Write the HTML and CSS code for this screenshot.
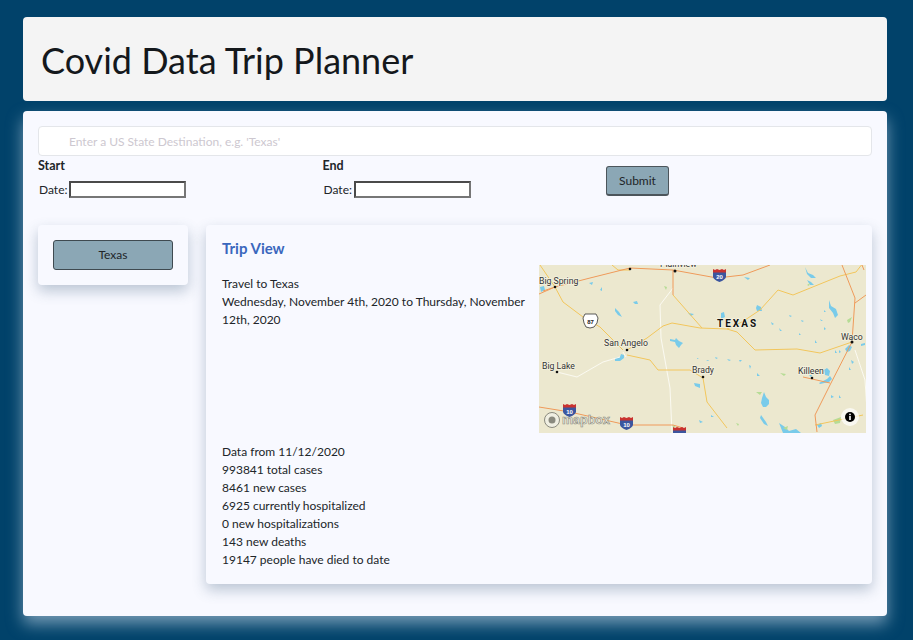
FILE: index.html
```html
<!DOCTYPE html>
<html lang="en">
<head>
<meta charset="utf-8">
<title>Covid Data Trip Planner</title>
<link rel="stylesheet" href="styles.css">
</head>
<body>
<header class="banner"><h1>Covid Data Trip Planner</h1></header>
<main class="panel">
  <input class="search" type="text" placeholder="Enter a US State Destination, e.g. 'Texas'">
  <form class="dates">
    <div class="field"><strong>Start</strong><label>Date: <input class="date" type="text"></label></div>
    <div class="field"><strong>End</strong><label>Date: <input class="date" type="text"></label></div>
    <div class="action"><button class="btn submit" type="button">Submit</button></div>
  </form>
  <div class="content">
    <aside class="card side"><button class="btn state" type="button">Texas</button></aside>
    <section class="card trip">
      <h2>Trip View</h2>
      <div class="trip-top">
        <p class="info">Travel to Texas<br>Wednesday, November 4th, 2020 to Thursday, November 12th, 2020</p>
        <svg class="map" viewBox="0 0 327 168" width="327" height="168" role="img" aria-label="Map of Texas">
          <defs>
            <filter id="soft"><feGaussianBlur stdDeviation="0.3"/></filter>
          </defs>
          <rect class="land" width="327" height="168"/>
          <g filter="url(#soft)">
            <g class="water">
              <path d="M76 43l4 4 3 5-4-2-3-4z"/><path d="M94 37l4-1 1 3-3 0z"/>
              <path d="M131 74l5 1 1-2 3 3 4 2-2 2-2 3-3-3-1-3-5-1z"/>
              <path d="M76 93l5-1 1-3 3 1 0 3-4 3-5 0z"/>
              <path d="M225 127l2 5 3 3 0 4-3 3-3 0-2-4 1-5z"/><path d="M222 150l5 7 2 4-4-2-4-6z"/>
              <path d="M290 35l2 6 5 3 2 6-3 3-2-5-4-5z"/>
              <path d="M218 40l4 2 1 4-5 0-1-3z"/><path d="M182 48l3-1 1 5-4 2z"/>
              <path d="M266 2l3 6 5 2 3 3-5 0-4-4z"/><path d="M268 15l4 2 3 3-4 0z"/><path d="M1 22l4-1 1 4-4 2z"/><path d="M50 18l4-1-1 3z"/><path d="M61 25l2-3 0 4z"/><path d="M205 12l6 1-2 2z"/><path d="M149 48l6 1-3 2z"/>
              <path d="M280 118l8-4 3-3 2 3-3 3-9 2z"/><path d="M285 105l3-2 3 3-1 5-4-1z"/>
              <path d="M306 84l4-4 3 2-2 4-3 1z"/><path d="M322 79l4-1 0 2-4 1z"/>
              <path d="M240 158l6 4 4 4 7-2 5 4h-18z"/><path d="M278 160l4-2 1 3-3 2z"/>
              <path d="M155 118l6 1 0 4-5-2z"/><path d="M188 94l4 1-2 1zM176 92l3 1-2 1zM167 95l3 0-1 1zM158 93l2 1-2 0zM200 95l3 0-2 2zM210 100l2 1-1 3zM218 108l3 3-3 0zM232 57l3 2-2 1zM240 63l3 3-2 0zM250 50l3 1-2 1zM262 55l3 1-2 1zM285 62l2 2-2 1zM300 85l2 2-2 1zM270 110l3 0-1 2zM296 85l2 3-2 0zM312 95l3 2-2 2zM260 68l2 2-2 0zM276 75l2 3-2 0zM281 54l3 2-2 0zM285 45l2 2-2 0zM160 155l4 2-3 1zM172 150l3 2-3 0zM300 130l2 3-2 0zM310 102l2 3-2 0zM292 130l3 2-3 1z"/>
            </g>
            <g class="green"><path d="M125 21l3 1-1 3zM217 127l6 0-2 3zM244 163l5-2-1 4zM294 155l8-3-1 6-5 1zM308 55l5-3-2 5-2 1zM268 20l3-2-1 3zM197 158l3 1-1 2zM133 160l3 1-1 3zM241 108l6 1-2 2z"/></g>
            <g class="road white">
              <path d="M134 23l-13 17 1 33 9 50 2 45"/><path d="M18 107l20 5 26-15 17-5"/><path d="M316 85l10 30 2 30"/><path d="M87 92l-3-5"/>
            </g>
            <g class="road yellow">
              <path d="M1 0l15 22 8 15 20 15 17 10 23 23"/>
              <path d="M88 85l20-12 16-12 9-3 28 5 27 1 10 3 18 18 42-1 23 4 32-11"/>
              <path d="M188 64l15-7 18-12 18-20 15 5 37-15 10-4 16-4 7-9"/>
              <path d="M134 30l29 33"/><path d="M88 90l23 5 8 10h32l13 8 4 24 20 26"/>
              <path d="M276 160l48-10"/><path d="M73 0l6 5h12"/>
            </g>
            <g class="road orange">
              <path d="M0 29l16-7 35-9 40-10 43 2 44 8 26-3 27-10"/>
              <path d="M0 142l31 5 57 13 46 0 10 3"/>
              <path d="M303 0l13 33-3 44-22 43-15 30 2 17"/><path d="M316 38l11-8"/><path d="M264 112l27 6"/>
              <path d="M134 5l0 25"/><path d="M16 22l-12 4"/><path d="M323 0l2 5"/>
            </g>
          </g>
          <g class="shields">
            <g transform="translate(174 4)"><path class="s-blue" d="M0 3h13v5q-1 3-6.500 5Q1 11 0 8z"/><path class="s-red" d="M0 0l2 1 2-1 2.500 1 2.500-1 2 1 2-1v3.500H0z"/><text x="6.500" y="10">20</text></g>
            <g transform="translate(24 139)"><path class="s-blue" d="M0 3h13v5q-1 3-6.500 5Q1 11 0 8z"/><path class="s-red" d="M0 0l2 1 2-1 2.500 1 2.500-1 2 1 2-1v3.500H0z"/><text x="6.500" y="10">10</text></g>
            <g transform="translate(81 152)"><path class="s-blue" d="M0 3h13v5q-1 3-6.500 5Q1 11 0 8z"/><path class="s-red" d="M0 0l2 1 2-1 2.500 1 2.500-1 2 1 2-1v3.500H0z"/><text x="6.500" y="10">10</text></g>
            <g transform="translate(134 162)"><path class="s-blue" d="M0 3h13v5q-1 3-6.500 5Q1 11 0 8z"/><path class="s-red" d="M0 0l2 1 2-1 2.500 1 2.500-1 2 1 2-1v3.500H0z"/><text x="6.500" y="10">10</text></g>
            <g transform="translate(44 48)"><path class="s-us" d="M2 1h11l2 4-1 5-3 4-4 1-4-1-2-4-1-5z"/><text class="dark" x="7.500" y="10.500">87</text></g>
          </g>
          <g class="labels">
            <text x="0" y="19">Big Spring</text>
            <text x="65" y="81">San Angelo</text>
            <text x="3" y="104">Big Lake</text>
            <text x="153" y="108">Brady</text>
            <text x="259" y="109">Killeen</text>
            <text x="302" y="75">Waco</text>
            <text x="121" y="2">Plainview</text>
            <text class="state-label" x="178" y="62">TEXAS</text>
          </g>
          <g class="dots">
            <circle cx="16" cy="22" r="1.300"/><circle cx="91" cy="4" r="1.300"/><circle cx="136" cy="6" r="1.500"/><circle cx="88" cy="85" r="1.300"/><circle cx="18" cy="107" r="1.300"/><circle cx="164" cy="112" r="1.300"/><circle cx="273" cy="113" r="1.300"/><circle cx="313" cy="77" r="1.500"/>
          </g>
          <g class="logo">
            <circle cx="13" cy="155" r="7.500"/><circle class="logo-in" cx="13" cy="155" r="3.500"/>
            <text x="23" y="159">mapbox</text>
          </g>
          <circle class="info-halo" cx="311" cy="152" r="9"/>
          <circle class="info-dot" cx="311" cy="152" r="5"/>
          <rect class="info-i" x="310.200" y="151" width="1.600" height="4"/><rect class="info-i" x="310.200" y="148.700" width="1.600" height="1.500"/>
        </svg>
      </div>
      <ul class="stats">
        <li>Data from 11/12/2020</li>
        <li>993841 total cases</li>
        <li>8461 new cases</li>
        <li>6925 currently hospitalized</li>
        <li>0 new hospitalizations</li>
        <li>143 new deaths</li>
        <li>19147 people have died to date</li>
      </ul>
    </section>
  </div>
</main>
</body>
</html>
```

FILE: styles.css
```css
* { box-sizing: border-box; }
html, body { height: 100%; }
body {
  margin: 0;
  padding: 17px 26px 24px 23px;
  background: #01426a;
  font-family: "Lato", "Open Sans", sans-serif;
  font-size: 12px;
  line-height: 18px;
  color: #212529;
  overflow: hidden;
}
.banner {
  height: 84px;
  background: #f4f4f4;
  border-radius: 4px;
  display: flex;
  align-items: center;
  padding: 3px 18px 0;
  margin-bottom: 10px;
}
h1 {
  margin: 0;
  font-size: 36px;
  font-weight: 400;
  line-height: 1.2;
  color: #14181c;
}
.panel {
  height: 505px;
  background: #f8f9ff;
  border-radius: 4px;
  padding: 15px;
  box-shadow: 0 8px 16px rgba(210, 225, 240, .55);
}
.search {
  display: block;
  width: 100%;
  height: 30px;
  padding: 0 30px;
  background: #fff;
  border: 1px solid #e4e6ea;
  border-radius: 4px;
  font: inherit;
}
.search::placeholder { color: #cdc8d0; opacity: 1; }
.dates {
  display: grid;
  grid-template-columns: 284.500px 283.500px 1fr;
  margin-bottom: 27px;
}
.field { display: flex; flex-direction: column; height: 42px; }
.field strong { font-size: 12.500px; font-weight: 700; height: 25px; line-height: 20px; }
.field label { display: flex; align-items: center; gap: 2px; padding-left: 1px; height: 17px; }
.date {
  width: 117px;
  height: 17px;
  padding: 0;
  background: #fff;
  border: 2px solid;
  border-color: #4a4a4a #767676 #767676 #4a4a4a;
  border-radius: 0;
}
.action { padding-top: 10px; }
.btn {
  font: inherit;
  color: #212529;
  background: #8ba7b5;
  border: 1px solid #3f4a50;
  border-radius: 3px;
  cursor: pointer;
}
.submit { width: 63px; height: 30px; border-color: #4c555b; border-bottom-width: 2px; }
.content { display: flex; gap: 18px; align-items: flex-start; }
.card {
  background: #f8f9ff;
  border-radius: 4px;
  box-shadow: 0 6px 14px rgba(60, 90, 120, .32);
}
.side { width: 150px; height: 60px; padding: 15px; }
.state { display: block; width: 120px; height: 30px; }
.trip { width: 666px; height: 359px; padding: 13px 6px 0 16px; }
h2 {
  margin: 0 0 7px;
  font-size: 15px;
  font-weight: 700;
  line-height: 20px;
  color: #3a67bd;
}
.trip-top { display: flex; justify-content: space-between; height: 168px; margin-bottom: 10px; }
.info { margin: 10px 0 0; width: 310px; }
.map { display: block; flex: none; }
.stats { list-style: none; margin: 0; padding: 0; }
.land { fill: #ece8cf; }
.road path { fill: none; stroke-linejoin: round; }
.white path { stroke: #fbfaf2; stroke-width: 1; }
.yellow path { stroke: #f2c65c; stroke-width: 1; }
.orange path { stroke: #ef9a5a; stroke-width: 1; }
.water path { fill: #79cbea; }
.green path { fill: #b6dc95; }
.s-red { fill: #c9322f; }
.s-blue { fill: #3c569f; }
.s-us { fill: #fff; stroke: #333; stroke-width: .8; }
.shields text { font: 700 6px "Liberation Sans", sans-serif; fill: #fff; text-anchor: middle; }
.shields .dark { fill: #222; }
.labels text {
  font: 400 8.700px "Roboto", sans-serif;
  fill: #333;
  stroke: #f5f2e0;
  stroke-width: 1.500px;
  paint-order: stroke;
}
.labels .state-label { font-weight: 700; font-size: 10px; letter-spacing: 2px; fill: #111; }
.dots circle { fill: #111; }
.logo circle { fill: #f0efe2; stroke: #8a8a7e; stroke-width: 1; }
.logo .logo-in { fill: #8a8a7e; stroke: none; }
.logo text {
  font: 700 12.500px "Liberation Sans", sans-serif;
  fill: #f0efe2;
  stroke: #8a8a7e;
  stroke-width: .6px;
}
.info-halo { fill: rgba(255, 255, 255, .7); }
.info-dot { fill: #000; }
.info-i { fill: #fff; }
```
